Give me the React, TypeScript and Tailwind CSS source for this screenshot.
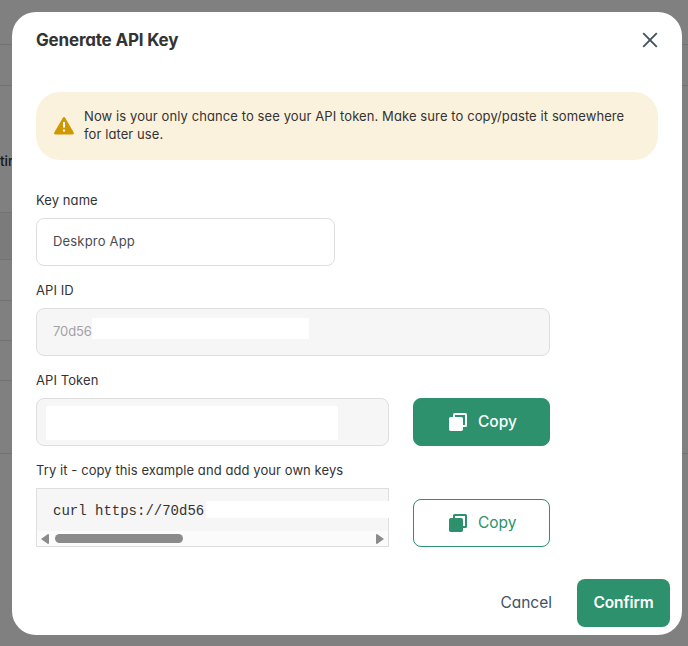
import React from "react";

function CopyIcon() {
  return (
    <svg width="18" height="18" viewBox="0 0 18 18" className="shrink-0" fill="currentColor">
      <rect x="0" y="4" width="14" height="14" rx="1.8" />
      <path d="M4 4V1.5Q4 0 5.5 0H16.5Q18 0 18 1.5V12.5Q18 14 16.5 14H14V12H16V2H6V4Z" />
    </svg>
  );
}

function CopyButton({ outline = false }: { outline?: boolean }) {
  return (
    <button
      className={
        "flex h-12 w-[137px] items-center rounded-lg border border-[#2c916c] pb-px pl-[35px] text-[15.5px] " +
        (outline ? "bg-white font-normal text-[#2c916c]" : "bg-[#2c916c] font-medium text-white")
      }
    >
      <CopyIcon />
      <span className="ml-[11px]">Copy</span>
    </button>
  );
}

function Label({ children }: { children: React.ReactNode }) {
  return (
    <div className="h-[18px] whitespace-nowrap text-[13px] leading-[18px] tracking-[0.08px] text-[#333333]">
      {children}
    </div>
  );
}

const dividers = [
  "h-[45px]",
  "h-[41px]",
  "h-[127px] w-3",
  "h-[47px] w-3 bg-[#7b7b7b]",
  "h-[41px] w-3",
  "h-10 w-3",
  "h-10 w-3",
  "h-[73px]",
];

export default function App() {
  return (
    <div className="relative h-[646px] w-[688px] overflow-hidden bg-[#808080] font-['Inter',sans-serif] text-[#333333] [font-feature-settings:'cv11']">
      <div className="flex flex-col">
        {dividers.map((d, i) => (
          <div key={i} className={"box-border border-b border-[#727272] " + d} />
        ))}
      </div>
      <span className="absolute left-0 top-[152px] text-[13.5px] font-medium leading-[18px] text-[#161616]">tin</span>
      <div className="absolute left-3 top-3 flex h-[623px] w-[670px] flex-col rounded-3xl bg-white pl-6 pr-3 pt-4">
        <div className="flex h-6 items-center justify-between pr-3">
          <h1 className="text-[17px] font-bold leading-6 tracking-[-0.18px]">Generate API Key</h1>
          <svg width="16" height="16" viewBox="0 0 16 16" fill="none" stroke="#40535f" strokeWidth="1.9">
            <path d="M1.2 1.2L14.8 14.8M14.8 1.2L1.2 14.8" />
          </svg>
        </div>

        <div className="mt-10 flex h-[68px] w-[622px] items-center rounded-3xl bg-[#fbf2dd] pl-[18px]">
          <svg width="20" height="18" viewBox="0 0 20 18" className="shrink-0">
            <path d="M8.7.9Q10-.8 11.3.9L19.6 15.2Q20.4 17.5 18 17.6H2Q-.4 17.5.4 15.2Z" fill="#cf9700" />
            <path d="M10 5V10.5M10 12.4V14.4" stroke="#fff" strokeWidth="2" />
          </svg>
          <p className="ml-[10px] whitespace-nowrap pb-[2px] text-[13px] leading-[18px] tracking-[0.095px]">
            Now is your only chance to see your API token. Make sure to copy/paste it somewhere
            <br />
            for later use.
          </p>
        </div>

        <div className="mt-[31px]"><Label>Key name</Label></div>
        <div className="mt-[9px] flex h-12 w-[299px] items-center rounded-lg border border-[#dedede] pl-4 text-[13px] tracking-[0.18px] text-[#4a4d50]">
          Deskpro App
        </div>

        <div className="mt-[15px]"><Label>API ID</Label></div>
        <div className="mt-[9px] flex h-12 w-[514px] items-center rounded-lg border border-[#dedede] bg-[#f6f6f6] pl-4 text-[13px] text-[#a3a3a3]">
          <span className="w-[39px] tracking-[-0.1px]">70d56</span>
          <span className="mb-[7px] h-[21px] w-[217px] bg-white" />
        </div>

        <div className="mt-[15px]"><Label>API Token</Label></div>
        <div className="mt-[9px] flex gap-6">
          <div className="flex h-12 w-[353px] items-center rounded-lg border border-[#dedede] bg-[#f6f6f6] pl-[9px]">
            <span className="mt-[2px] h-[34px] w-[292px] bg-white" />
          </div>
          <CopyButton />
        </div>

        <div className="mt-[15px]"><Label>Try it - copy this example and add your own keys</Label></div>
        <div className="mt-[9px] flex items-end gap-6">
          <div className="h-[59px] w-[353px] border border-[#dedede] bg-[#f6f6f6]">
            <div className="flex h-[42px] pl-4 pt-3">
              <code className="w-[153px] whitespace-nowrap font-['Liberation_Mono',monospace] text-[14px] leading-5 text-[#333333]">
                curl https://70d56
              </code>
              <span className="-mr-px h-[17px] flex-1 bg-white" />
            </div>
            <div className="flex h-[15px] items-center bg-[#fbfbfb] px-1 text-[#8b8b8b]">
              <svg width="8" height="10" viewBox="0 0 8 10" fill="currentColor"><path d="M0 5L7 0Q8 0 8 1V9Q8 10 7 10Z" /></svg>
              <span className="ml-[6px] h-[9px] w-32 rounded-full bg-[#8b8b8b]" />
              <svg width="8" height="10" viewBox="0 0 8 10" fill="currentColor" className="ml-auto"><path d="M8 5L1 0Q0 0 0 1V9Q0 10 1 10Z" /></svg>
            </div>
          </div>
          <CopyButton outline />
        </div>

        <div className="mt-8 flex h-12 items-center justify-end gap-[25px] text-[15.5px]">
          <button className="pb-px text-[#40535f]">Cancel</button>
          <button className="h-12 w-[93px] rounded-lg bg-[#2c916c] pb-px font-semibold tracking-[-0.1px] text-white">Confirm</button>
        </div>
      </div>
    </div>
  );
}
